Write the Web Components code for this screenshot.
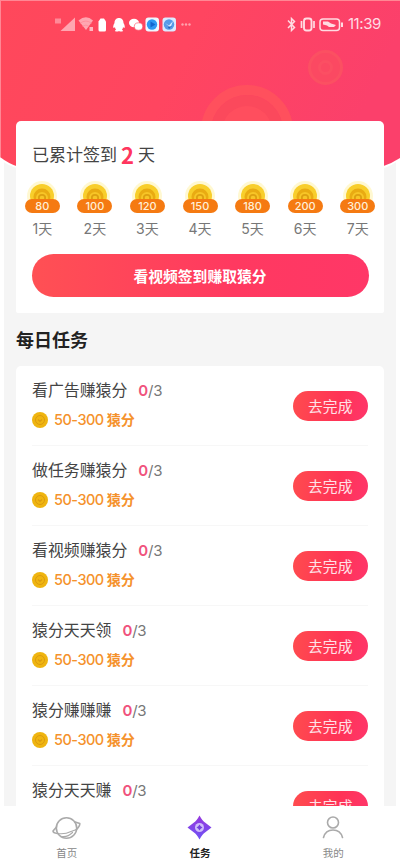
<!DOCTYPE html>
<html lang="zh-CN">
<head>
<meta charset="utf-8">
<title>每日任务</title>
<style>
html,body{margin:0;height:100%;overflow:hidden;background:#fff}
body{font-family:Inter,"Noto Sans CJK SC",sans-serif;color:#444}
</style>
</head>
<body>
<task-app></task-app>
<script>
const define = (name, html, setup) => customElements.define(name, class extends HTMLElement {
  constructor() {
    super();
    const t = document.createElement('template');
    t.innerHTML = html;
    this.attachShadow({ mode: 'open' }).append(t.content.cloneNode(true));
  }
  connectedCallback() { if (setup) setup(this, this.shadowRoot); }
});

define('status-bar', `
<style>
:host{display:flex;justify-content:space-between;align-items:center;height:18px;padding:15px 19px 0 54px}
svg{display:block}
.right{display:flex;align-items:center;gap:4px;color:#ffdbe2;font:15px/18px Inter,sans-serif;letter-spacing:-.4px}
</style>
<svg width="140" height="18" viewBox="54 15 140 18">
  <path d="M55 18.500h6v5h-6z" fill="#ff8a98"/>
  <path d="M75 17.500V31H60.500z" fill="#ffa6b1"/>
  <path d="M78.500 20.500q7.500-6.500 14.500 0L86 30z" fill="#ffa6b1"/><path d="M80 23.300q6-4.500 11.500 0M82.500 26.300q3.500-2.500 6.500 0" stroke="#ff8b99" stroke-width=".8" fill="none"/><path d="M89.500 27h3.500v4h-3.500z" fill="#ffb7c0"/>
  <path d="M100.500 18.500h3.500l2 3v8.500q0 1.500-1.500 1.500h-4.500q-1.500 0-1.500-1.500v-8.500z" fill="#fff"/>
  <path d="M119 18c-3 0-4.500 2.300-4.500 5-1.300 2-1.600 4-1 5l1.500-.7q0 1.300 1 2.200l-1.200 1.500q2.500 1 4.200 0 1.700 1 4.200 0L122 29.500q1-.900 1-2.200l1.500.7c.600-1 .3-3-1-5 0-2.700-1.500-5-4.500-5z" fill="#fff"/>
  <ellipse cx="134" cy="23" rx="5" ry="4.200" fill="#fff"/><ellipse cx="138.500" cy="26.500" rx="4.200" ry="3.700" fill="#fff" stroke="#ff5c70" stroke-width=".7"/>
  <rect x="145.500" y="17.500" width="13.500" height="14" rx="3" fill="#eef7ff"/><circle cx="152" cy="24.500" r="5.200" fill="#2e98f2"/><path d="M150.500 21.500l5 3-5 3z" fill="#1265cf"/>
  <rect x="162.500" y="17.500" width="13.500" height="14" rx="3" fill="#dceaff"/><circle cx="169" cy="24.500" r="5.200" fill="#579be9"/><path d="M165 23l4 2.500 4-4.500-2.500 6.500z" fill="#ddecff"/><path d="M168 27l4-1-3 3z" fill="#2764bb"/>
  <g fill="#ffa3ad"><circle cx="182.500" cy="24.500" r="1.200"/><circle cx="186" cy="24.500" r="1.200"/><circle cx="189.500" cy="24.500" r="1.200"/></g>
</svg>
<div class="right">
<svg width="58" height="18" viewBox="286 15 58 18" fill="none" stroke="#ffdbe2">
  <path d="M288 20.500l6.500 7-3 3V18.500l3 3-6.500 6.500" stroke-width="1.500"/>
  <rect x="304" y="18.500" width="7.500" height="12" rx="2.500" stroke-width="1.900"/><path d="M301.500 21v7M314 21v7" stroke-width="1.700"/>
  <rect x="320" y="19" width="19.500" height="11.500" rx="3" stroke-width="1.500"/><path d="M342 22.500v4.500" stroke-width="2"/><path d="M323 21.500h5l3 2 5 1.500-2 2h-5l-2-1.500-4-1z" fill="#ffdbe2" stroke="none"/>
</svg><span>11:39</span></div>`);

define('page-hero', `
<style>
:host{display:block;position:absolute;inset:0 0 auto 0;height:170px}
svg{display:block}
</style>
<svg width="400" height="170" viewBox="0 0 400 170">
  <defs><linearGradient id="g" x1="0" y1="0" x2="1" y2=".2"><stop offset="0" stop-color="#ff485b"/><stop offset=".5" stop-color="#ff4560"/><stop offset="1" stop-color="#fb406b"/></linearGradient></defs>
  <path d="M0 150H400V159Q392 166 381 169H19Q9 166 0 160z" fill="#fff"/>
  <path d="M0 0H400V158Q391 164 381 167H19Q9 164 0 157z" fill="url(#g)"/>
  <path d="M0 .5H400" stroke="#ff8794"/><path d="M.5 0V157" stroke="#ff8794"/>
  <g fill="none"><circle cx="247" cy="131" r="41" stroke="#ff505d" stroke-width="10"/><circle cx="247" cy="131" r="36" fill="#fb495c"/><circle cx="247" cy="131" r="25" fill="#ff4e5e"/></g>
  <circle cx="325.500" cy="67.500" r="16" fill="#fb4962" stroke="#fb5062" stroke-width="3"/><circle cx="325.500" cy="67.500" r="6" fill="none" stroke="#fb4f63" stroke-width="3"/>
</svg>`);

define('coin-day', `
<style>
:host{display:flex;flex-direction:column;align-items:center;flex:1 1 0;min-width:0}
.coin{display:grid;height:34px;width:36px}
svg{grid-area:1/1}
b{grid-area:1/1;align-self:end;justify-self:center;width:35px;height:14px;border-radius:7px;background:#f57a12;color:#fff0d8;font:500 11px/14px Inter,sans-serif;text-align:center}
.day{margin-top:7px;font-size:14px;line-height:18px;color:#777;white-space:nowrap}
</style>
<div class="coin"><svg width="36" height="34" viewBox="0 0 36 34">
<circle cx="18" cy="17" r="15" fill="#fff4b8" opacity=".65"/><circle cx="18" cy="17" r="12" fill="#f8ce2b"/><circle cx="18" cy="18" r="8.500" fill="#e9ab12"/><circle cx="18" cy="19" r="6" fill="#f7c527"/><circle cx="18" cy="19" r="3.200" fill="none" stroke="#dda011" stroke-width="1.800"/></svg><b></b></div>
<div class="day"><slot></slot></div>`, (h, r) => { r.querySelector('b').textContent = h.getAttribute('amount'); });

define('sign-card', `
<style>
:host{display:block;box-sizing:border-box;margin:88px 16px 0;height:191.500px;background:#fff;border-radius:5px 5px 2px 2px;overflow:hidden}
.title{display:flex;align-items:center;height:26px;padding:21px 16px 0;font-size:17px;line-height:26px;color:#444}
.title b{font:700 22px/26px "Noto Sans CJK SC",sans-serif;color:#ff365e;margin:0 4px 3px 4px}
.days{display:flex;margin-top:11px}
.action{display:flex;align-items:center;justify-content:center;height:43px;margin:16px 15.500px 0;border-radius:22px;background:linear-gradient(90deg,#ff5054,#ff3960 60%,#ff3767);color:#fff;font-size:14.800px;font-weight:700}
</style>
<div class="title"><span>已累计签到</span><b>2</b><span>天</span></div>
<div class="days"><slot></slot></div>
<div class="action">看视频签到赚取猿分</div>`);

define('task-row', `
<style>
:host{display:flex;align-items:center;justify-content:space-between;height:79px;margin:0 16px;border-bottom:1px solid #f7f7f7}
.info{height:53px}
.name{display:flex;align-items:center;font-size:15.900px;line-height:24px;color:#444}
.count{margin-left:11px;font-size:15px;color:#777;letter-spacing:-.2px}
.count b{color:#f0527c;font-weight:600}
.reward{display:flex;align-items:center;gap:6px;margin-top:5px;color:#f5922c;font-size:14.500px;line-height:24px;font-weight:500}
.num{letter-spacing:-.5px}
.cjk{margin-left:-3px;font-size:14px;font-weight:700}
.go{display:flex;align-items:center;justify-content:center;width:75.500px;height:30px;border-radius:15px;background:linear-gradient(100deg,#ff4c4e,#ff3356 60%,#ff366b);color:#ffe1e7;font-size:14.800px}
</style>
<div class="info"><div class="name"><slot></slot><span class="count"><b>0</b>/3</span></div></div>
<div class="go">去完成</div>`, (h, r) => {
  if (h.hasAttribute('partial')) return;
  r.querySelector('.info').insertAdjacentHTML('beforeend', `<div class="reward"><svg width="16" height="16" viewBox="0 0 16 16"><circle cx="8" cy="8" r="8" fill="#efb510"/><circle cx="8" cy="8" r="4.500" fill="none" stroke="#dc9a10"/><path d="M6 7.500l2 2 2-2" fill="none" stroke="#dc9a10" stroke-width="1.200"/></svg><span class="num">50-300</span><span class="cjk">猿分</span></div>`);
});

define('nav-item', `
<style>
:host{display:flex;flex:1;flex-direction:column;align-items:center;padding-top:7px;font-size:10.500px;line-height:16px;color:#888}
:host([active]){color:#222;font-weight:700}
.icon{display:block;height:30px;margin-bottom:3px}
</style>
<svg class="icon" width="32" height="30" viewBox="0 0 32 30" fill="none" stroke="#aaa" stroke-width="1.600" stroke-linecap="round" stroke-linejoin="round"></svg><slot></slot>`, (h, r) => {
  r.querySelector('svg').innerHTML = {
    planet: '<circle cx="15.500" cy="15" r="10.200"/><path d="M5.500 14L2 18Q2 20 6.500 20.500M24.200 9L28.800 10.500Q29 13 25.500 16.500"/><path d="M6.500 20.500Q14 21.500 20 18.500L25.500 16.500M11.500 23.500Q17 24 21.500 19.500" stroke-width="1.200"/>',
    star: '<defs><linearGradient id="p" x1="0" y1="0" x2="0" y2="1"><stop stop-color="#9738dd"/><stop offset="1" stop-color="#6e52f5"/></linearGradient></defs><path d="M15.500 2.500Q18.500 8 21 9.500L27.500 14.500L21 19.500Q18.500 21 15.500 26.500Q12.500 21 10 19.500L3.500 14.500L10 9.500Q12.500 8 15.500 2.500z" fill="url(#p)" stroke="none"/><circle cx="15.500" cy="14.500" r="4.500" fill="#cfbdfa" stroke="none"/><path d="M15.500 11.500l1.200 1.800 1.800 1.200-1.800 1.200-1.200 1.800-1.200-1.800-1.800-1.200 1.800-1.200z" fill="#7442dd" stroke="none"/>',
    user: '<circle cx="16" cy="9.500" r="5.500"/><path d="M6.500 24.500Q8.500 17 16 17T25.500 24.500"/>'
  }[h.getAttribute('icon')];
});

define('task-app', `
<style>
:host{display:flex;flex-direction:column;position:relative;width:400px;height:867px;overflow:hidden;background:#fff}
main{flex:1;min-height:0;overflow:hidden;margin:0 4px;background:#f5f5f5}
.content{position:relative;margin:0 -4px}
h2{margin:0;padding:14px 16px 11px;font-size:18px;line-height:28.500px;color:#222}
.list{margin:0 16px;background:#fff;border-radius:5px}
nav{display:flex;height:61px;background:#fff}
</style>
<page-hero></page-hero>
<main><div class="content"><status-bar></status-bar>
<sign-card><coin-day amount="80">1天</coin-day><coin-day amount="100">2天</coin-day><coin-day amount="120">3天</coin-day><coin-day amount="150">4天</coin-day><coin-day amount="180">5天</coin-day><coin-day amount="200">6天</coin-day><coin-day amount="300">7天</coin-day></sign-card>
<h2>每日任务</h2>
<div class="list"><task-row>看广告赚猿分</task-row><task-row>做任务赚猿分</task-row><task-row>看视频赚猿分</task-row><task-row>猿分天天领</task-row><task-row>猿分赚赚赚</task-row><task-row partial>猿分天天赚</task-row></div></div></main>
<nav><nav-item icon="planet">首页</nav-item><nav-item icon="star" active>任务</nav-item><nav-item icon="user">我的</nav-item></nav>`);
</script>
</body>
</html>
